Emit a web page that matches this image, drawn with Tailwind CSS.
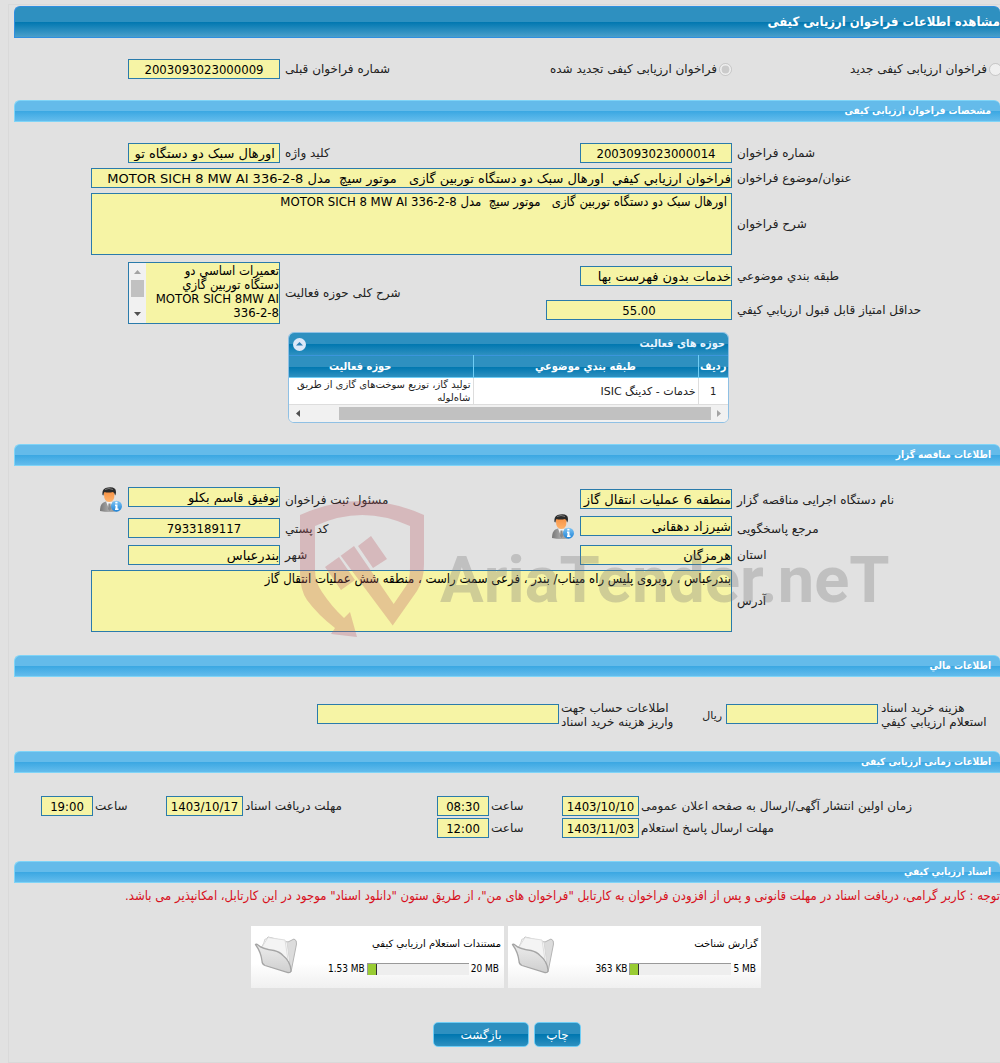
<!DOCTYPE html>
<html lang="fa" dir="rtl">
<head>
<meta charset="utf-8">
<meta name="viewport" content="width=device-width, initial-scale=1">
<title>مشاهده اطلاعات فراخوان ارزیابی کیفی</title>
<script src="https://cdn.jsdelivr.net/npm/@tailwindcss/browser@4"></script>
</head>
<body class="overflow-x-hidden bg-[#e1e1e1] pl-2 pt-1 font-['Tahoma','DejaVu_Sans',sans-serif] text-[12px] leading-[14px] text-[#222]">
<svg class="absolute size-0" aria-hidden="true">
  <defs>
    <linearGradient id="skin" x1="0" y1="0" x2="0" y2="1"><stop offset="0" stop-color="#f58a3c"/><stop offset="1" stop-color="#ffb36b"/></linearGradient>
    <linearGradient id="suit" x1="0" y1="0" x2="1" y2="0"><stop offset="0" stop-color="#777"/><stop offset=".5" stop-color="#aaa"/><stop offset="1" stop-color="#888"/></linearGradient>
    <linearGradient id="info" x1="0" y1="0" x2="0" y2="1"><stop offset="0" stop-color="#7cc4f5"/><stop offset="1" stop-color="#1f83d6"/></linearGradient>
    <linearGradient id="flap" x1="0" y1="0" x2="0" y2="1"><stop offset="0" stop-color="#ececec"/><stop offset="1" stop-color="#cfcfcf"/></linearGradient>
    <symbol id="person" viewBox="0 0 24 26">
      <path d="M1 24C1 18 3 15.500 7 14.500L14 14.500C17.500 15.500 19 18 19 21V24Q10 26 1 24Z" fill="url(#suit)"/>
      <path d="M7 14.500L10 22L14 14.500Z" fill="#f2f2f2"/>
      <path d="M9.500 16.500H11.500L12 22L10.500 24L9 22Z" fill="#8b8b8b"/>
      <path d="M5 6Q5 2 10 2Q15.500 2 15.500 7Q15.500 15 10.300 15Q5 15 5 7Z" fill="url(#skin)"/>
      <path d="M3.500 8Q2.500 1 9 .5Q17 -.5 17 5Q17 7 16.200 8.500Q15.500 5.500 14 5Q9 6 5.500 5Q4.500 6 4.500 8.500Z" fill="#2b2b2b"/>
      <path d="M6 2.500Q10 .5 14 2.500" fill="none" stroke="#777" stroke-width="1"/>
      <circle cx="17.500" cy="19.200" r="5.500" fill="url(#info)"/>
      <path d="M16 17.500H18.500V21.500H19.500V23H16V21.500H16.500V19H16ZM16.300 14.800H18.500V16.500H16.300Z" fill="#fff"/>
    </symbol>
    <symbol id="folder" viewBox="0 0 44 40">
      <path d="M7 12L14 1L34 6L40 3Q43 4 42.500 8L37 36L14 30Z" fill="#dcdcdc" stroke="#b5b5b5"/>
      <path d="M8 13L11 3L33 6L36 28L20 18Z" fill="#fafafa" stroke="#d5d5d5"/>
      <path d="M8 11L14 1.500L31 4L34 24L20 15Z" fill="#f4f4f4" stroke="#dedede"/>
      <path d="M1.500 8.500Q2 7.500 4 9Q8 13 20 14.500Q26 16 29 19.500Q36 25 37 34Q37 37 34 36.500L11 29.500Q8 28.500 8 25Q7 16 1.500 8.500Z" fill="url(#flap)" stroke="#a5a5a5" stroke-width="1.300"/>
    </symbol>
  </defs>
</svg>

<main class="relative border-y border-l border-[#d9d9d9] pb-[15px] pl-[5px] pt-px [&_h2]:h-[22px] [&_h2]:rounded-t-md [&_h2]:border [&_h2]:border-r-0 [&_h2]:border-[#7fd4f7] [&_h2]:bg-[linear-gradient(#64bbea_50%,#3aa7e2_50%,#63bcec)] [&_h2]:pr-[9px] [&_h2]:font-['Tahoma','DejaVu_Sans_Condensed',sans-serif] [&_h2]:text-[10px] [&_h2]:font-bold [&_h2]:leading-5 [&_h2]:text-white [&_input[type=text]]:h-5 [&_input[type=text]]:shrink-0 [&_input[type=text]]:border [&_input[type=text]]:border-[#2a7bab] [&_input[type=text]]:bg-[#f6f4a5] [&_input[type=text]]:text-[13px] [&_input[type=text]]:leading-[18px] [&_input[type=text]]:text-black [&_input.text-center]:font-['Tahoma','DejaVu_Sans_Condensed',sans-serif] [&_textarea]:resize-none [&_textarea]:overflow-hidden [&_textarea]:bg-[#f6f4a5] [&_textarea]:font-['Tahoma','DejaVu_Sans_Condensed',sans-serif] [&_textarea]:text-[13px] [&_textarea]:leading-[14px] [&_textarea]:text-black">

  <h1 class="h-8 rounded-t-md border border-r-0 border-[#2f8fe0] bg-[linear-gradient(#2e90c0_50%,#0077b0_50%,#4a9fcb)] font-['Tahoma','DejaVu_Sans_Condensed',sans-serif] text-[13px] font-bold leading-[30px] text-white">مشاهده اطلاعات فراخوان ارزیابی کیفی</h1>

  <form>
    <div class="mb-[21px] mt-[21px] flex items-center">
      <div class="-mr-0.5 flex w-[270px] shrink-0 items-center gap-0.5">
        <input id="new" name="kind" type="radio" disabled class="size-[13px]">
        <label for="new">فراخوان ارزیابی کیفی جدید</label>
      </div>
      <div class="flex shrink-0 items-center gap-0.5">
        <input id="renewed" name="kind" type="radio" checked disabled class="size-[13px]">
        <label for="renewed">فراخوان ارزیابی کیفی تجدید شده</label>
      </div>
      <label for="prev" class="ml-[5px] flex-1 text-end">شماره فراخوان قبلی</label>
      <input id="prev" type="text" readonly class="ml-[114px] w-[152px] text-center" value="2003093023000009">
    </div>

    <h2>مشخصات فراخوان ارزیابی کیفی</h2>
    <div class="mb-[21px] mt-[21px] flex flex-col gap-[5px]">
      <div class="flex items-center gap-[5px]">
        <label for="num" class="w-[263px] shrink-0 text-end">شماره فراخوان</label>
        <input id="num" type="text" readonly class="w-[152px] text-center" value="2003093023000014">
        <label for="key" class="flex-1 text-end">کلید واژه</label>
        <input id="key" type="text" readonly class="ml-[114px] w-[152px]" value=" اورهال سبک دو دستگاه تو">
      </div>
      <div class="flex items-center gap-[5px]">
        <label for="subject" class="w-[263px] shrink-0 text-end">عنوان/موضوع فراخوان</label>
        <input id="subject" type="text" readonly class="ml-[77px] min-w-0 flex-1" value="فراخوان ارزيابي کيفي  اورهال سبک دو دستگاه توربین گازی   موتور سیچ  مدل MOTOR SICH 8 MW AI 336-2-8">
      </div>
      <div class="flex items-center gap-[5px]">
        <label for="desc" class="w-[263px] shrink-0 text-end">شرح فراخوان</label>
        <textarea id="desc" readonly class="ml-[77px] h-[62px] min-w-0 flex-1 border border-[#2a7bab] px-1 pt-px">اورهال سبک دو دستگاه توربین گازی   موتور سیچ  مدل MOTOR SICH 8 MW AI 336-2-8</textarea>
      </div>
      <div class="mt-0.5 flex items-center">
        <div class="flex shrink-0 flex-col gap-3.5">
          <div class="flex items-center gap-[5px]">
            <label for="cat" class="w-[263px] text-end">طبقه بندي موضوعي</label>
            <input id="cat" type="text" readonly class="w-[152px]" value="خدمات بدون فهرست بها">
          </div>
          <div class="flex items-center gap-[5px]">
            <label for="score" class="w-[263px] text-end">حداقل امتیاز قابل قبول ارزيابي کيفي</label>
            <input id="score" type="text" readonly class="w-[186px] text-center" value="55.00">
          </div>
        </div>
        <label for="scope" class="ml-[5px] flex-1 text-end">شرح کلی حوزه فعالیت</label>
        <div class="ml-[114px] flex h-[62px] w-[152px] shrink-0 border border-[#2a7bab]">
          <textarea id="scope" readonly class="h-full w-[133px] pt-px">تعمیرات اساسي دو
دستگاه توربین گازي
MOTOR SICH 8MW AI
336-2-8</textarea>
          <div class="flex h-full w-[17px] flex-col items-center bg-[#f1f1f1] py-[7px]">
            <svg class="h-1 w-[7px]" viewBox="0 0 7 4"><path d="M0 4L3.500 0L7 4Z" fill="#a3a3a3"/></svg>
            <div class="mt-1.5 h-[17px] w-[13px] bg-[#c1c1c1]"></div>
            <svg class="mt-auto h-1 w-[7px]" viewBox="0 0 7 4"><path d="M0 0L3.500 4L7 0Z" fill="#505050"/></svg>
          </div>
        </div>
      </div>

      <section class="mr-[271px] mt-[3px] w-[441px] overflow-hidden rounded-md border border-[#8fc0e4] bg-white">
        <div class="flex h-[22px] items-center justify-between bg-[linear-gradient(#2e90c0_50%,#0077b0_50%,#2e90c0)] pl-1 pr-[3px] font-['Tahoma','DejaVu_Sans_Condensed',sans-serif] text-[11px] font-bold text-[#e8f4ff]">
          <span>حوزه های فعالیت</span>
          <button type="button" aria-label="بستن جدول"><svg class="size-[13px]" viewBox="0 0 13 13"><circle cx="6.500" cy="6.500" r="6.500" fill="#dde8f8"/><path d="M3 7.500L6.500 4L10 7.500Z" fill="#2e7fb4"/></svg></button>
        </div>
        <table class="w-[480px] table-fixed border-collapse">
          <thead class="font-['Tahoma','DejaVu_Sans_Condensed',sans-serif] text-[11px]">
            <tr class="h-[22px] border-b border-t border-b-[#6fcdf5] border-t-[#3b95dc] bg-[linear-gradient(#2e90c0_50%,#0077b0_50%,#2e90c0)] text-white [&_th]:p-0 [&_th]:font-bold">
              <th class="w-[30px] border-l border-[#6fcdf5]">ردیف</th>
              <th class="w-[225px] border-l border-[#6fcdf5]">طبقه بندي موضوعي</th>
              <th>حوزه فعالیت</th>
            </tr>
          </thead>
          <tbody>
            <tr class="h-[27px] border-b border-[#ddd] text-[10px] leading-[13px] [&_td]:p-0">
              <td class="border-l border-[#ddd] text-center">1</td>
              <td class="border-l border-[#ddd] text-[11px]"><p class="pr-0.5">خدمات - کدینگ ISIC</p></td>
              <td><p class="pr-0.5">تولید گاز، توزیع سوخت‌های گازی از طریق<br>شاه‌لوله</p></td>
            </tr>
          </tbody>
        </table>
        <div class="flex h-[17px] items-center bg-[#f1f1f1] px-[7px]">
          <svg class="h-[7px] w-1" viewBox="0 0 4 7"><path d="M0 0L4 3.500L0 7Z" fill="#a3a3a3"/></svg>
          <div class="mr-1.5 h-[13px] w-[372px] bg-[#c1c1c1]"></div>
          <svg class="mr-auto h-[7px] w-1" viewBox="0 0 4 7"><path d="M4 0L0 3.500L4 7Z" fill="#505050"/></svg>
        </div>
      </section>
    </div>

    <h2>اطلاعات مناقصه گزار</h2>
    <div class="relative mb-[23px] mt-[21px] flex flex-col gap-[5px]">
      <div class="flex gap-[5px]">
        <label for="org" class="mt-1.5 w-[263px] shrink-0 text-end">نام دستگاه اجرایی مناقصه گزار</label>
        <input id="org" type="text" readonly class="mt-0.5 w-[152px]" value="منطقه 6 عملیات انتقال گاز">
        <label for="owner" class="mt-1.5 flex-1 text-end">مسئول ثبت فراخوان</label>
        <input id="owner" type="text" readonly class="w-[152px]" value="توفيق قاسم بکلو">
        <div class="w-[109px]"><button type="button" aria-label="اطلاعات مسئول" class="block h-6"><svg class="h-[26px] w-6"><use href="#person"/></svg></button></div>
      </div>
      <div class="flex gap-[5px]">
        <label for="contact" class="mt-1.5 w-[263px] shrink-0 text-end">مرجع پاسخگویی</label>
        <input id="contact" type="text" readonly class="w-[152px]" value="شیرزاد دهقانی">
        <button type="button" aria-label="اطلاعات مرجع" class="-mt-0.5 block h-6"><svg class="h-[26px] w-6"><use href="#person"/></svg></button>
        <label for="zip" class="mt-1.5 flex-1 text-end">کد پستي</label>
        <input id="zip" type="text" readonly class="ml-[114px] mt-0.5 w-[152px] text-center" value="7933189117">
      </div>
      <div class="mt-0.5 flex items-center gap-[5px]">
        <label for="province" class="w-[263px] shrink-0 text-end">استان</label>
        <input id="province" type="text" readonly class="w-[152px]" value="هرمزگان">
        <label for="city" class="flex-1 text-end">شهر</label>
        <input id="city" type="text" readonly class="ml-[114px] w-[152px]" value="بندرعباس">
      </div>
      <div class="flex items-center gap-[5px]">
        <label for="addr" class="w-[263px] shrink-0 text-end">آدرس</label>
        <textarea id="addr" readonly class="ml-[77px] h-[62px] min-w-0 flex-1 border border-[#2a7bab] pt-px">بندرعباس ، روبروی پلیس راه میناب/ بندر ، فرعی سمت راست ، منطقه شش عملیات انتقال گاز</textarea>
      </div>
      <svg class="pointer-events-none absolute left-[286px] top-[11px] h-[145px] w-[620px]" viewBox="0 0 620 145" aria-hidden="true">
        <g fill="#bc5c66" fill-opacity=".3">
          <path d="M0 17Q62 -11 124 17V66Q124 82 117 93L92.700 127.500L40.700 57.700L54 48L93.700 106L106 88Q110 82 110 70V28Q62 6 15 28V72Q15 84 22 94Q32 109 44 120L50 114L57 139L31 136L35 130Q18 117 7 102Q0 92 0 74Z"/>
          <path d="M58 48L71 38L87 61L73 70ZM25 69L39 59L55 82L41 92Z"/>
        </g>
        <text x="140" y="104" direction="ltr" font-family="Roboto, sans-serif" font-weight="700" font-size="65" fill="#737373" fill-opacity=".3">AriaTender.neT</text>
      </svg>
    </div>

    <h2>اطلاعات مالي</h2>
    <div class="mb-[22px] mt-6 flex items-start">
      <label for="cost" class="ml-[3px] w-[119px] shrink-0 text-end">هزینه خرید اسناد<br>استعلام ارزیابي کیفي</label>
      <input id="cost" type="text" readonly class="mt-[3px] w-[152px]">
      <span class="mr-1 mt-2 w-5 text-[11px]">ریال</span>
      <label for="account" class="ml-0.5 w-[141px] text-end">اطلاعات حساب جهت<br>واریز هزینه خرید اسناد</label>
      <input id="account" type="text" readonly class="mt-[3px] w-[242px]">
    </div>

    <h2>اطلاعات زمانی ارزیابی کیفی</h2>
    <div class="mb-[23px] mt-[23px] flex flex-col gap-0.5">
      <div class="flex items-center gap-0.5">
        <label for="d1" class="w-[359px] shrink-0 text-end">زمان اولین انتشار آگهی/ارسال به صفحه اعلان عمومی</label>
        <input id="d1" type="text" readonly class="w-[77px] text-center" value="1403/10/10">
        <label for="t1" class="w-[69px] shrink-0 text-end">ساعت</label>
        <input id="t1" type="text" readonly class="w-[52px] text-center" value="08:30">
        <label for="d2" class="flex-1 text-end">مهلت دریافت اسناد</label>
        <input id="d2" type="text" readonly class="w-[77px] text-center" value="1403/10/17">
        <label for="t2" class="w-[69px] shrink-0 text-end">ساعت</label>
        <input id="t2" type="text" readonly class="ml-[27px] w-[52px] text-center" value="19:00">
      </div>
      <div class="flex items-center gap-0.5">
        <label for="d3" class="w-[359px] shrink-0 text-end">مهلت ارسال پاسخ استعلام</label>
        <input id="d3" type="text" readonly class="w-[77px] text-center" value="1403/11/03">
        <label for="t3" class="w-[69px] shrink-0 text-end">ساعت</label>
        <input id="t3" type="text" readonly class="w-[52px] text-center" value="12:00">
      </div>
    </div>

    <h2>اسناد ارزيابي کيفي</h2>
    <p class="mt-1.5 whitespace-nowrap font-['Tahoma','DejaVu_Sans_Condensed',sans-serif] text-[13px] text-[#d8101c]">توجه : کاربر گرامی، دریافت اسناد در مهلت قانونی و پس از افزودن فراخوان به کارتابل "فراخوان های من"، از طریق ستون "دانلود اسناد" موجود در این کارتابل، امکانپذیر می باشد.</p>

    <div class="mt-[23px] flex justify-center gap-1 pr-0.5 text-[10px] text-black [&_span]:font-['Tahoma','DejaVu_Sans_Condensed',sans-serif]">
      <article class="flex h-[62px] w-[253px] bg-[linear-gradient(#fff_60%,#f0f0f0)] pl-[3px] pr-[3px]">
        <div class="flex-1 pt-[11px]">
          <h3>گزارش شناخت</h3>
          <div class="mt-2.5 flex h-4 items-center gap-0.5 pr-0.5">
            <span dir="ltr">5 MB</span>
            <div class="flex h-3 w-[102px] justify-end border-l border-t border-[#999] bg-[#eee]"><div class="w-[9px] border-r border-[#333] bg-[#9c3]"></div></div>
            <span dir="ltr">363 KB</span>
          </div>
        </div>
        <svg class="mt-2.5 h-10 w-11"><use href="#folder"/></svg>
      </article>
      <article class="flex h-[62px] w-[253px] bg-[linear-gradient(#fff_60%,#f0f0f0)] pl-[3px] pr-[3px]">
        <div class="flex-1 pt-[11px]">
          <h3>مستندات استعلام ارزیابي کیفي</h3>
          <div class="mt-2.5 flex h-4 items-center gap-0.5 pr-0.5">
            <span dir="ltr">20 MB</span>
            <div class="flex h-3 w-[102px] justify-end border-l border-t border-[#999] bg-[#eee]"><div class="w-[9px] border-r border-[#333] bg-[#9c3]"></div></div>
            <span dir="ltr">1.53 MB</span>
          </div>
        </div>
        <svg class="mt-2.5 h-10 w-11"><use href="#folder"/></svg>
      </article>
    </div>

    <div class="mt-[34px] flex justify-center gap-[5px] text-[12px] text-white">
      <button type="button" class="h-[25px] w-[47px] rounded-[5px] border border-[#6fcdf5] bg-[linear-gradient(#2e90c0_50%,#0077b0_50%,#2e90c0)]">چاپ</button>
      <button type="button" class="h-[25px] w-24 rounded-[5px] border border-[#6fcdf5] bg-[linear-gradient(#2e90c0_50%,#0077b0_50%,#2e90c0)]">بازگشت</button>
    </div>
  </form>
</main>
</body>
</html>
